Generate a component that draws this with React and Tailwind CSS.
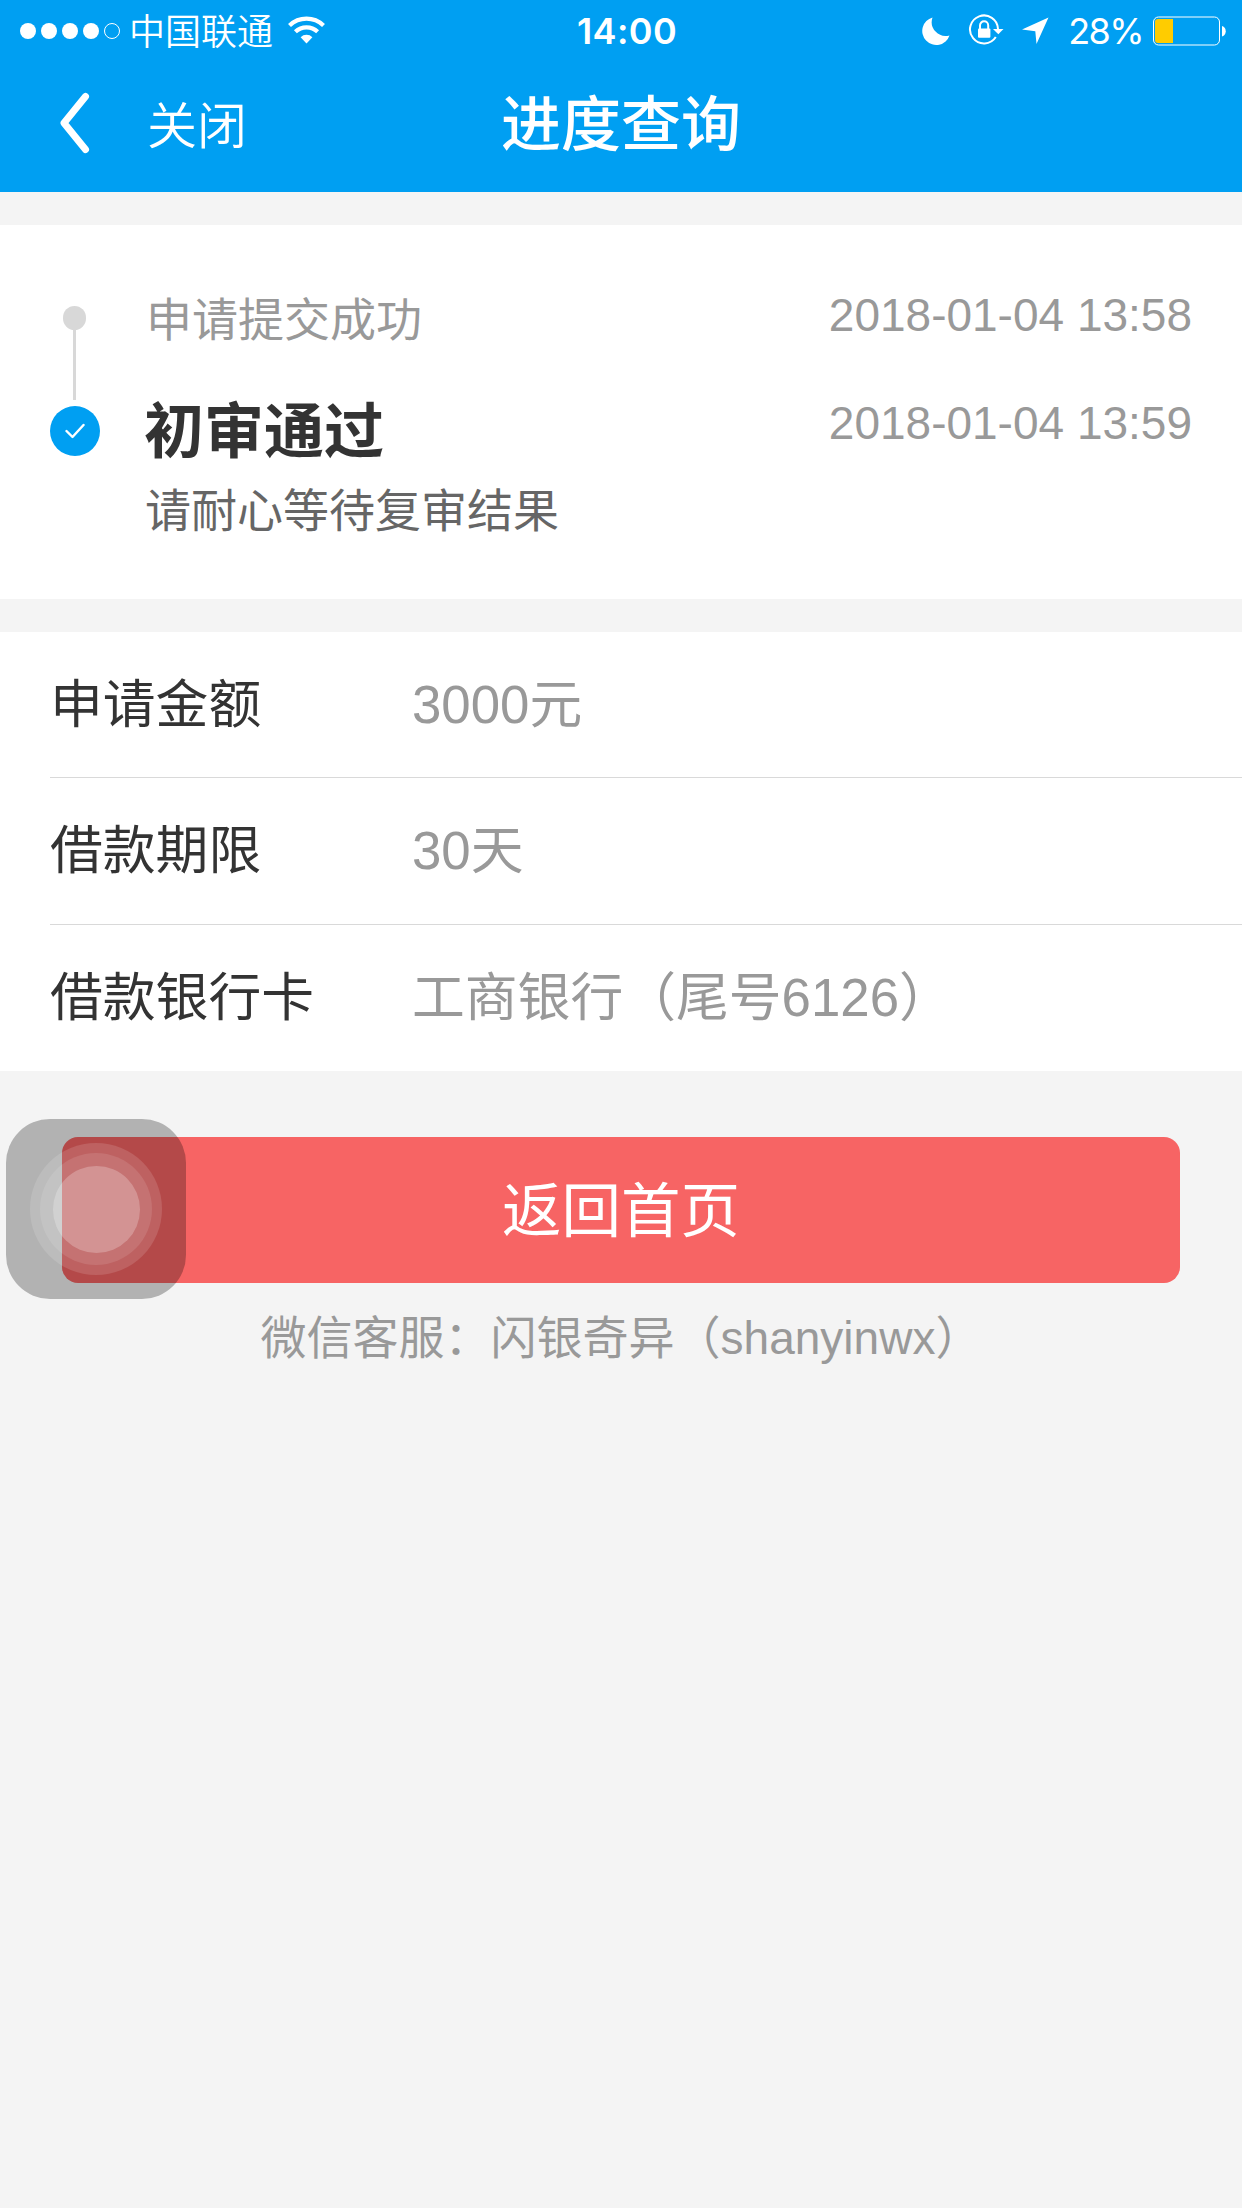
const CJK = "font-['Liberation_Sans','Noto_Sans_CJK_SC',sans-serif]";

const details = [
  { label: '申请金额', value: '3000元' },
  { label: '借款期限', value: '30天' },
  { label: '借款银行卡', value: '工商银行（尾号6126）' },
];

function StatusBar() {
  return (
    <div className="grid h-[62px] grid-cols-[1fr_auto_1fr] items-center pr-4 pl-5">
      <div className="flex items-center">
        {/* Signal */}
        <div className="flex gap-[5px]">
          <span className="h-4 w-4 rounded-full bg-white"></span>
          <span className="h-4 w-4 rounded-full bg-white"></span>
          <span className="h-4 w-4 rounded-full bg-white"></span>
          <span className="h-4 w-4 rounded-full bg-white"></span>
          <span className="h-4 w-4 rounded-full border border-white"></span>
        </div>
        <span className="mt-[3px] ml-[9px] text-[36px] leading-[36px] font-[350]">中国联通</span>
        <svg className="-mt-[3px] ml-[15px] h-[28px] w-[37px]" viewBox="0 0 37 28" fill="none" stroke="white" strokeWidth="4.2">
          <path d="M1.500 9.500a24.500 24.500 0 0 1 34 0" />
          <path d="M7.400 15.800a16 16 0 0 1 22.200 0" />
          <path d="M12.600 21.200a8.400 8.400 0 0 1 11.800 0L18.500 27.400Z" fill="white" stroke="none" />
        </svg>
      </div>

      <span className="ml-[8px] font-[Inter,sans-serif] text-[36px] leading-[36px] font-semibold tracking-[0.4px]">14:00</span>

      <div className="flex items-center justify-end">
        <svg className="h-[28px] w-[28px]" viewBox="0 0 28 28" fill="white">
          <path d="M10.500 0.500A14 14 0 0 0 27.500 18.500A14 14 0 1 1 10.500 0.500Z" />
        </svg>
        <svg className="-mt-[2px] ml-[18px] h-[32px] w-[36px]" viewBox="0 0 36 32" fill="none" stroke="white" strokeWidth="2">
          <path d="M27.800 23A14 14 0 1 1 30 15" />
          <path d="M25 15h10.500l-5.200 5.200Z" fill="white" stroke="none" />
          <path d="M12 15v-3.600a4.100 4.100 0 0 1 8.200 0V15" />
          <rect x="10" y="14.5" width="12.4" height="9.3" rx="1" fill="white" stroke="none" />
        </svg>
        <svg className="ml-[17px] h-[28px] w-[28px]" viewBox="0 0 28 28" fill="white">
          <path d="M27.500 0.500L15.500 27L14.300 14.200L1 12.500Z" />
        </svg>
        <span className="ml-[19px] font-[Inter,sans-serif] text-[36px] leading-[36px] font-normal tracking-[-1.6px]">28%</span>
        <svg className="-mt-px ml-[10px] h-[30px] w-[73px]" viewBox="0 0 73 30">
          <rect x="0.5" y="1" width="66" height="28" rx="5" fill="none" stroke="white" />
          <path d="M5 3h15v24H5a3 3 0 0 1-3-3V6a3 3 0 0 1 3-3Z" fill="#ffcc00" />
          <path d="M69 10c5 1.500 5 9 0 10.500Z" fill="white" />
        </svg>
      </div>
    </div>
  );
}

function NavBar() {
  return (
    <div className="grid h-[130px] grid-cols-[1fr_auto_1fr] pt-[31px]">
      <div className="flex h-[60px] items-center pl-[58px]">
        <svg className="h-[62px] w-8" viewBox="0 0 32 62" fill="none" stroke="white" strokeWidth="7" strokeLinecap="round" strokeLinejoin="round">
          <path d="M27.500 4.500L6 31L27.500 57.500" />
        </svg>
        <span className="mt-[8px] ml-[57px] text-[50px] leading-[50px] font-[350]">关闭</span>
      </div>
      <h1 className="mt-[3px] text-[60px] leading-[60px] font-medium">进度查询</h1>
    </div>
  );
}

function Timeline() {
  return (
    <div className="flex h-[374px] bg-white px-[50px] pt-[68px]">
      <div className="flex w-[50px] flex-col items-center pt-[13px]">
        <span className="-ml-px h-[24px] w-[23px] rounded-full bg-[#d8d8d8]"></span>
        <span className="-ml-px h-[70px] w-[3px] bg-[#d8d8d8]"></span>
        <span className="mt-[6px] flex h-[50px] w-[50px] items-center justify-center rounded-full bg-[#009ff2]">
          <svg className="h-5 w-5" viewBox="0 0 20 20" fill="none" stroke="white" strokeWidth="2.4" strokeLinecap="round" strokeLinejoin="round">
            <path d="M1.500 10L7.500 16L18.500 4" />
          </svg>
        </span>
      </div>
      <div className="ml-[46px] flex-1 pt-[2px]">
        <div className="flex items-start justify-between text-[46px] leading-[50px] text-[#999]">
          <p>申请提交成功</p>
          <p className="-mt-[5px]">2018-01-04 13:58</p>
        </div>
        <div className="mt-[58px] flex items-start justify-between leading-[60px]">
          <h2 className="-ml-[2px] text-[60px] font-bold text-[#333]">初审通过</h2>
          <p className="-mt-[10px] text-[46px] text-[#999]">2018-01-04 13:59</p>
        </div>
        <p className="mt-[23px] -ml-px text-[46px] leading-[50px] text-[#666]">请耐心等待复审结果</p>
      </div>
    </div>
  );
}

export default function App() {
  return (
    <div className={`${CJK} min-h-[2208px] w-[1242px] bg-[#f4f4f4]`}>
      <header className="h-[192px] bg-[#009ff2] text-white">
        <StatusBar />
        <NavBar />
      </header>

      <main className="pt-[33px]">
        <Timeline />

        <ul className="mt-[33px] bg-white pl-[50px]">
          {details.map((item) => (
            <li key={item.label} className="flex h-[147px] items-center border-b border-[#d9d9d9] pt-px text-[52.8px] leading-none first:h-[146px] last:h-[146px] last:border-b-0">
              <span className="w-[362px] text-[#333]">{item.label}</span>
              <span className="text-[#999]">{item.value}</span>
            </li>
          ))}
        </ul>

        <div className="relative px-[62px] pt-[66px]">
          <button className="flex h-[146px] w-full items-center justify-center rounded-2xl bg-[#f76464] pt-[4px] text-[59.5px] leading-none text-white">
            返回首页
          </button>

          {/* Floating touch button */}
          <div className="absolute top-12 left-[6px] flex h-[180px] w-[180px] items-center justify-center rounded-[44px] bg-black/27">
            <div className="flex h-[132px] w-[132px] items-center justify-center rounded-full bg-white/13">
              <div className="flex h-[112px] w-[112px] items-center justify-center rounded-full bg-white/11">
                <div className="h-[87px] w-[87px] rounded-full bg-white/24"></div>
              </div>
            </div>
          </div>
        </div>

        <p className="mt-[30px] text-center text-[46px] leading-[50px] text-[#999]">微信客服：闪银奇异（shanyinwx）</p>
      </main>
    </div>
  );
}
